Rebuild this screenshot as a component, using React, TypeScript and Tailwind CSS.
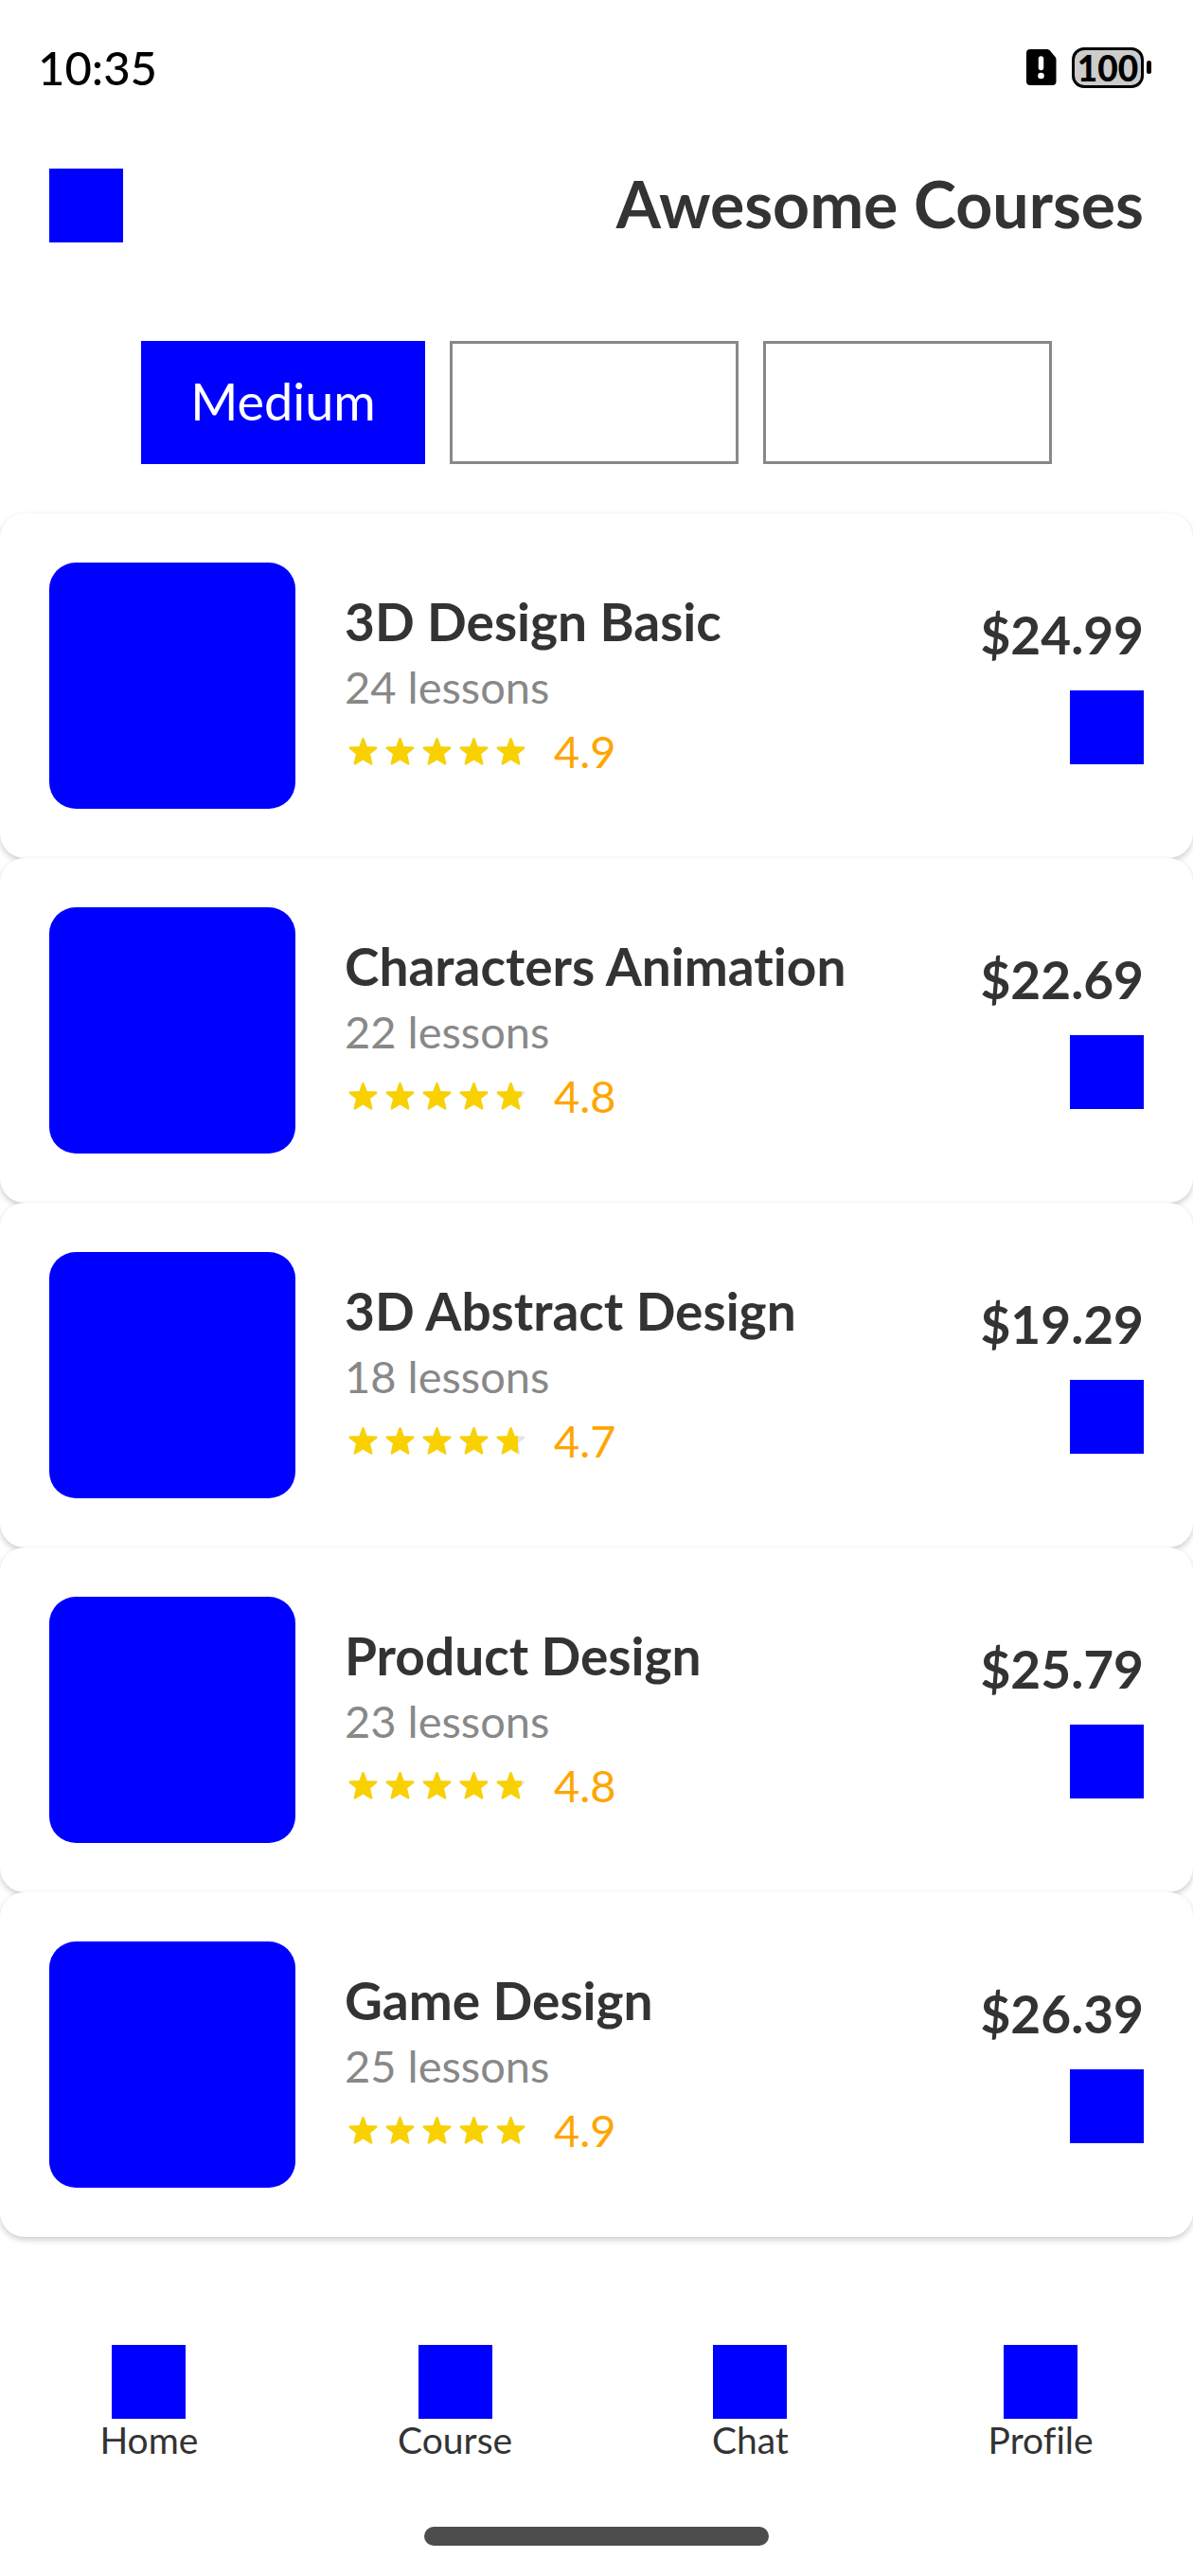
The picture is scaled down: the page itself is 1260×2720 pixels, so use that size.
type Course = { title: string; lessons: number; rating: number; price: string };

const courses: Course[] = [
  { title: "3D Design Basic", lessons: 24, rating: 4.9, price: "$24.99" },
  { title: "Characters Animation", lessons: 22, rating: 4.8, price: "$22.69" },
  { title: "3D Abstract Design", lessons: 18, rating: 4.7, price: "$19.29" },
  { title: "Product Design", lessons: 23, rating: 4.8, price: "$25.79" },
  { title: "Game Design", lessons: 25, rating: 4.9, price: "$26.39" },
];

const tabs = ["Home", "Course", "Chat", "Profile"];

const STAR =
  "M19.500 5C20 5 20.400 5.300 20.700 6L23.600 14.200L33 14.600C34.600 14.700 34.900 16 33.700 17L27 22.300L29.300 32C29.600 33.300 28.600 34 27.400 33.300L19.500 28.500L11.600 33.300C10.400 34 9.400 33.300 9.700 32L12 22.300L5.300 17C4.100 16 4.400 14.700 6 14.600L15.400 14.200L18.300 6C18.600 5.300 19 5 19.500 5Z";

function Star({ fill }: { fill: number }) {
  return (
    <span className="relative block size-[39px]">
      <svg viewBox="0 0 39 39" className="size-full fill-[#e5e5e5]" aria-hidden="true">
        <path d={STAR} />
      </svg>
      <span className="absolute inset-y-0 left-0 overflow-hidden" style={{ width: `${fill * 100}%` }}>
        <svg viewBox="0 0 39 39" className="size-[39px] max-w-none fill-[#f9d100]" aria-hidden="true">
          <path d={STAR} />
        </svg>
      </span>
    </span>
  );
}

function Rating({ value }: { value: number }) {
  return (
    <div className="flex items-center gap-[26px]">
      <div className="flex" role="img" aria-label={`${value} out of 5`}>
        {[0, 1, 2, 3, 4].map((i) => (
          <Star key={i} fill={Math.min(1, Math.max(0, value - i))} />
        ))}
      </div>
      <span className="text-[47px] leading-[56px] text-[#ffa500]">{value}</span>
    </div>
  );
}

function StatusBar() {
  return (
    <div className="flex h-[142px] items-center justify-between pr-11 pl-10 text-black">
      <time className="text-[49px] leading-[60px] font-medium">10:35</time>
      <div className="flex items-center gap-4">
        <svg viewBox="0 0 32 38" className="h-[38px] w-8" role="img" aria-label="SIM alert">
          <path d="M4 0H21.500C23 0 24 .5 25 1.500L30 7.500C31 8.500 31.500 9.500 31.500 11V34C31.500 36.500 30 38 27.500 38H4C1.500 38 0 36.500 0 34V4C0 1.500 1.500 0 4 0Z" />
          <path d="M15.500 10V19.500" stroke="#fff" strokeWidth="5.500" strokeLinecap="round" />
          <circle cx="15.500" cy="28" r="3.300" fill="#fff" />
        </svg>
        <div className="flex items-center gap-[3px]">
          <div className="flex h-[43px] w-[76px] items-center justify-center rounded-[13px] border-3 border-black bg-[#cccccc] text-[37px] leading-none font-black">
            100
          </div>
          <div className="h-[14px] w-[5px] rounded-full bg-black" />
        </div>
      </div>
    </div>
  );
}

function CourseCard({ course }: { course: Course }) {
  return (
    <li className="flex items-center gap-[52px] rounded-[26px] bg-white p-[52px] shadow-[0_3px_6px_rgba(0,0,0,0.2)]">
      <div className="size-[260px] shrink-0 rounded-[28px] bg-[#0000ff]" />
      <div className="min-w-0 flex-1 pb-1">
        <h2 className="text-[55px] leading-[66px] font-bold">{course.title}</h2>
        <p className="pt-1 pb-2 text-[47px] leading-[64px] text-[#888888]">{course.lessons} lessons</p>
        <Rating value={course.rating} />
      </div>
      <div className="flex flex-col items-end gap-[26px] pb-1">
        <span className="text-[55px] leading-[66px] font-bold">{course.price}</span>
        <button type="button" aria-label={`Add ${course.title}`} className="size-[78px] bg-[#0000ff]" />
      </div>
    </li>
  );
}

export default function App() {
  return (
    <div className="flex min-h-screen flex-col bg-white font-[Lato,sans-serif] text-[#333333] [font-variant-ligatures:none]">
      <StatusBar />
      <header className="flex items-center justify-between px-[52px] py-9">
        <button type="button" aria-label="Menu" className="size-[78px] bg-[#0000ff]" />
        <h1 className="pb-1 text-[68px] leading-[74px] font-bold">Awesome Courses</h1>
      </header>
      <div className="flex justify-center gap-[26px] pt-[68px] pb-[52px]">
        <button type="button" className="h-[130px] bg-[#0000ff] px-[52px] pb-1 text-[54px] text-white">
          Medium
        </button>
        <button type="button" aria-label="Second level" className="h-[130px] w-[305px] border-3 border-[#888888]" />
        <button type="button" aria-label="Third level" className="h-[130px] w-[305px] border-3 border-[#888888]" />
      </div>
      <ul>
        {courses.map((c) => (
          <CourseCard key={c.title} course={c} />
        ))}
      </ul>
      <nav className="mt-auto flex justify-around pb-[70px]">
        {tabs.map((t) => (
          <a key={t} href="#" className="flex flex-col items-center text-[39px] leading-[44px]">
            <span className="size-[78px] bg-[#0000ff]" />
            {t}
          </a>
        ))}
      </nav>
      <div className="mx-auto mb-8 h-5 w-[364px] rounded-full bg-[#4d4d4d]" />
    </div>
  );
}
